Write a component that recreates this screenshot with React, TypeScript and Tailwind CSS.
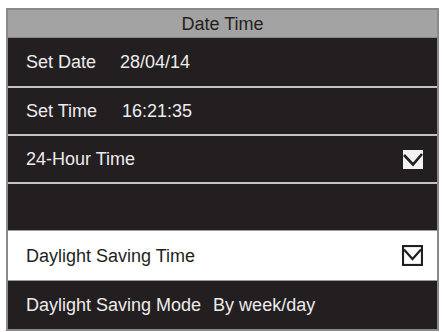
import React from "react";

function CheckDark() {
  return (
    <svg width="20" height="19" viewBox="0 0 20 19">
      <rect x="0" y="0" width="20" height="19" fill="#f2f2f2" />
      <polyline points="1,5 10,14.5 19,4" fill="none" stroke="#231f20" strokeWidth="2.6" />
    </svg>
  );
}

function CheckLight() {
  return (
    <svg width="21" height="21" viewBox="0 0 21 21">
      <rect x="1" y="1" width="19" height="19" fill="none" stroke="#231f20" strokeWidth="2.2" />
      <polyline points="2,4.5 10.5,14 19,4.5" fill="none" stroke="#231f20" strokeWidth="2.2" />
    </svg>
  );
}

export default function App() {
  return (
    <div
      className="w-[442px] h-[332px] bg-white pt-[8px] pl-[6px]"
      style={{ fontFamily: '"Liberation Sans", Arial, sans-serif' }}
    >
      <div className="w-[433px] border-2 border-[#8a8a8a] bg-[#231f20] text-[18px] leading-none text-[#ececec]">
        <div className="h-[28px] bg-[#a3a3a3] border-b border-[#8a8a8a] flex items-center justify-center text-[#231f20]">
          Date Time
        </div>
        <div className="h-[50px] flex items-center pl-[18px] border-b-2 border-[#c4c4c4]">
          <span>Set Date</span>
          <span className="ml-[24px]">28/04/14</span>
        </div>
        <div className="h-[48px] flex items-center pl-[18px] border-b-2 border-[#c4c4c4]">
          <span>Set Time</span>
          <span className="ml-[25px]">16:21:35</span>
        </div>
        <div className="h-[48px] flex items-center justify-between pl-[18px] pr-[14px] border-b-2 border-[#c4c4c4]">
          <span>24-Hour Time</span>
          <CheckDark />
        </div>
        <div className="h-[46px]" />
        <div className="h-[51px] flex items-center justify-between pl-[18px] pr-[14px] bg-white text-[#231f20] border-y border-[#9a9a9a]">
          <span>Daylight Saving Time</span>
          <CheckLight />
        </div>
        <div className="h-[48px] flex items-center pl-[18px]">
          <span>Daylight Saving Mode</span>
          <span className="ml-[12px]">By week/day</span>
        </div>
      </div>
    </div>
  );
}
